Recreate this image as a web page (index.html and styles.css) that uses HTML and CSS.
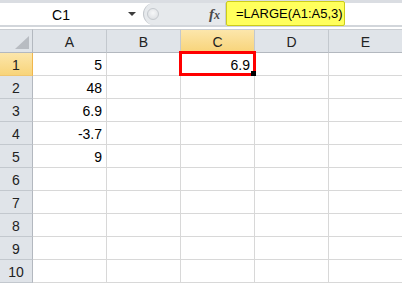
FILE: index.html
```html
<!DOCTYPE html>
<html>
<head>
<meta charset="utf-8">
<link rel="stylesheet" href="styles.css">
</head>
<body>
<div class="fbar">
  <div class="namebox"><span class="name">C1</span><span class="arrow"></span></div>
  <div class="fxzone"><span class="grip"><span class="dot"></span></span><span class="fx">f<span class="x">x</span></span></div>
  <div class="input"><span class="hl">=LARGE(A1:A5,3)</span></div>
</div>
<div class="gap"></div>
<div class="sheet">
  <div class="h corner"><span class="tri"></span></div>
  <div class="h col">A</div>
  <div class="h col">B</div>
  <div class="h col act">C</div>
  <div class="h col">D</div>
  <div class="h col">E</div>

  <div class="h row act">1</div><div class="c">5</div><div class="c"></div><div class="c">6.9</div><div class="c"></div><div class="c"></div>
  <div class="h row">2</div><div class="c">48</div><div class="c"></div><div class="c"></div><div class="c"></div><div class="c"></div>
  <div class="h row">3</div><div class="c">6.9</div><div class="c"></div><div class="c"></div><div class="c"></div><div class="c"></div>
  <div class="h row">4</div><div class="c">-3.7</div><div class="c"></div><div class="c"></div><div class="c"></div><div class="c"></div>
  <div class="h row">5</div><div class="c">9</div><div class="c"></div><div class="c"></div><div class="c"></div><div class="c"></div>
  <div class="h row">6</div><div class="c"></div><div class="c"></div><div class="c"></div><div class="c"></div><div class="c"></div>
  <div class="h row">7</div><div class="c"></div><div class="c"></div><div class="c"></div><div class="c"></div><div class="c"></div>
  <div class="h row">8</div><div class="c"></div><div class="c"></div><div class="c"></div><div class="c"></div><div class="c"></div>
  <div class="h row">9</div><div class="c"></div><div class="c"></div><div class="c"></div><div class="c"></div><div class="c"></div>
  <div class="h row">10</div><div class="c"></div><div class="c"></div><div class="c"></div><div class="c"></div><div class="c"></div>
</div>
<div class="sel"><span class="handle"></span></div>
</body>
</html>
```

FILE: styles.css
```css
* { box-sizing: border-box; }
html, body {
  margin: 0;
  padding: 0;
  width: 402px;
  height: 284px;
  overflow: hidden;
  background: #fff;
  font-family: "Liberation Sans", Arial, sans-serif;
  color: #000;
  position: relative;
}
.fbar {
  display: flex;
  height: 27px;
  border-top: 3px solid #dadde2;
  border-bottom: 2px solid #d2d6db;
  position: relative;
}
.namebox {
  width: 143px;
  background: #fff;
  display: flex;
  align-items: center;
  font-size: 14px;
}
.name {
  width: 122px;
  text-align: center;
  padding-top: 1px;
}
.arrow {
  width: 0;
  height: 0;
  border-left: 4px solid transparent;
  border-right: 4px solid transparent;
  border-top: 4px solid #3c3c3c;
  margin-left: 6px;
}
.fxzone {
  width: 83px;
  background: #e6e9ec;
  border-radius: 12px 0 0 12px;
  border-left: 1px solid #c2c6cb;
  border-right: 1px solid #c9ccd0;
  display: flex;
  align-items: center;
  position: relative;
}
.grip {
  width: 12px;
  height: 12px;
  border-radius: 50%;
  margin-left: 3px;
  background: radial-gradient(circle at 50% 40%, #f6f7f8, #d8dbdf);
  border: 1px solid #c5c9ce;
}
.fx {
  margin-left: auto;
  margin-right: 5px;
  font-family: "Liberation Serif", serif;
  font-style: italic;
  font-weight: bold;
  font-size: 15px;
  color: #4a4a4a;
}
.fx .x { font-size: 12px; }
.input {
  flex: 1;
  background: #fff;
  position: relative;
}
.hl {
  position: absolute;
  left: 0px;
  top: -2px;
  width: 119px;
  height: 25px;
  background: #ffff5c;
  border: 1px solid #cccc1a;
  border-radius: 2px;
  font-size: 13px;
  line-height: 23px;
  padding-left: 9px;
}
.gap { height: 2px; }
.sheet {
  display: grid;
  grid-template-columns: 33px 74px 74px 74px 74px 74px;
  grid-template-rows: 24px repeat(10, 23px);
  font-size: 14px;
}
.h {
  background: #e0e4e9;
  color: #222;
  display: flex;
  align-items: center;
  justify-content: center;
  border-right: 1px solid #c3c8ce;
  border-bottom: 1px solid #b3b8bf;
}
.col { border-top: 1px solid #c9cdd2; padding-top: 1px; }
.corner { border-top: 1px solid #c9cdd2; position: relative; border-right-color: #b3b8bf; }
.tri {
  position: absolute;
  right: 3px;
  bottom: 3px;
  width: 0;
  height: 0;
  border-left: 14px solid transparent;
  border-bottom: 13px solid #b8bcc2;
}
.row { border-right-color: #b3b8bf; border-bottom-color: #c3c8ce; padding-top: 1px; }
.h.act {
  background: linear-gradient(#fce6ab, #f8d47a);
  border-bottom-color: #f0b64c;
}
.row.act { border-right-color: #f0b64c; border-bottom-color: #f0c670; }
.c {
  border-right: 1px solid #d8d8d8;
  border-bottom: 1px solid #d8d8d8;
  text-align: right;
  padding-right: 4px;
  line-height: 22px;
  padding-top: 1px;
}
.sel {
  position: absolute;
  left: 179px;
  top: 51px;
  width: 77px;
  height: 25px;
  border: 3px solid #ff0000;
}
.handle {
  position: absolute;
  right: -3px;
  bottom: -3px;
  width: 5px;
  height: 5px;
  background: #000;
}
```
